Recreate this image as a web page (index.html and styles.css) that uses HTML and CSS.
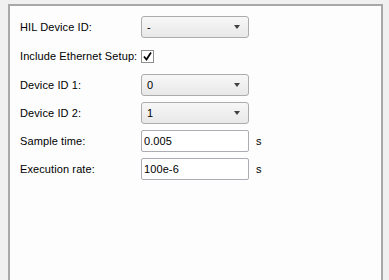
FILE: index.html
```
<!DOCTYPE html>
<html lang="en">
<head>
    <meta charset="UTF-8">
    <title>HIL Setup</title>
    <link rel="stylesheet" href="styles.css">
</head>
<body>
    <div class="panel">
        <div class="form-grid">
            <label class="field-label">HIL Device ID:</label>
            <div class="combo"><span class="combo-value">-</span><span class="combo-arrow"></span></div>
            <span></span>

            <label class="field-label">Include Ethernet Setup:</label>
            <div class="check-cell">
                <span class="checkbox">
                    <svg width="11" height="11" viewBox="0 0 11 11"><polyline points="2,5.5 4.5,8.5 9,1.5" fill="none" stroke="#000" stroke-width="1.8"/></svg>
                </span>
            </div>
            <span></span>

            <label class="field-label">Device ID 1:</label>
            <div class="combo"><span class="combo-value">0</span><span class="combo-arrow"></span></div>
            <span></span>

            <label class="field-label">Device ID 2:</label>
            <div class="combo"><span class="combo-value">1</span><span class="combo-arrow"></span></div>
            <span></span>

            <label class="field-label">Sample time:</label>
            <div class="text-input">0.005</div>
            <span class="unit">s</span>

            <label class="field-label">Execution rate:</label>
            <div class="text-input">100e-6</div>
            <span class="unit">s</span>
        </div>
    </div>
</body>
</html>
```

FILE: styles.css
```
/* page */
body {
    margin: 0;
    padding: 4px 6px 0 8px;
    background-color: #f0f0f0;
    font-family: "Liberation Sans", Arial, sans-serif;
    font-size: 11px;
    letter-spacing: 0.1px;
    color: #000;
    overflow: hidden;
}

/* white frame */
.panel {
    height: 270px;
    border: 2px solid #a8a8a8;
    background-color: #fdfdfd;
    box-shadow: 0 1px 0 #cfcfcf;
    padding: 10px 0 0 10px;
}

.form-grid {
    display: grid;
    grid-template-columns: 121px 108px auto;
    grid-template-rows: 22px 24px 22px 22px 22px 22px;
    row-gap: 6px;
    align-items: center;
}

.field-label {
    white-space: nowrap;
}

/* combo box */
.combo {
    height: 22px;
    box-sizing: border-box;
    border: 1px solid #acacac;
    border-radius: 3px;
    background: linear-gradient(#f7f7f7, #e8e8e8);
    display: flex;
    align-items: center;
    justify-content: space-between;
    padding: 0 8px 0 5px;
}

.combo-arrow {
    width: 0;
    height: 0;
    border-left: 3.5px solid transparent;
    border-right: 3.5px solid transparent;
    border-top: 4px solid #404040;
}

/* checkbox */
.check-cell {
    display: flex;
    align-items: center;
    height: 24px;
}

.checkbox {
    width: 13px;
    height: 13px;
    box-sizing: border-box;
    border: 1px solid #8e8f8f;
    background-color: #fff;
    display: flex;
    align-items: center;
    justify-content: center;
}

/* line edit */
.text-input {
    height: 22px;
    box-sizing: border-box;
    border: 1px solid #abadb3;
    border-radius: 2px;
    background-color: #fff;
    padding: 0 2px;
    line-height: 20px;
}

.unit {
    padding-left: 7px;
}
```
